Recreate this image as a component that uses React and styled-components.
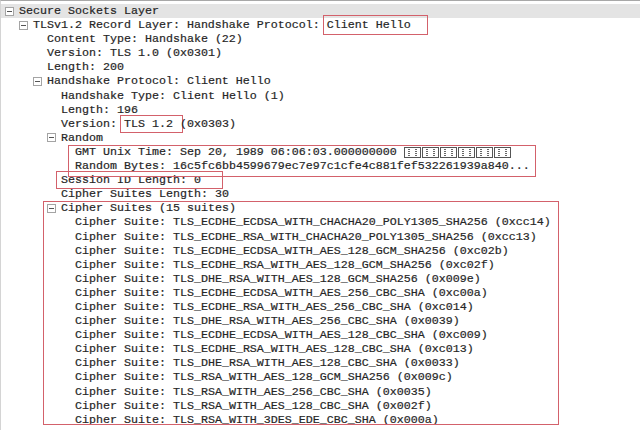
import React from "react";
import styled, { createGlobalStyle } from "styled-components";

const Global = createGlobalStyle`
  html, body { margin: 0; padding: 0; background: #fff; overflow: hidden; }
  body { width: 640px; height: 430px; }
`;

const ROW_H = 14.1;
const MARK = "#d3616b";

const Pane = styled.div`
  width: 640px;
  height: 430px;
  box-sizing: border-box;
  border-top: 1px solid #a8a8a8;
  border-left: 1px solid #d4d4d4;
  padding-top: 3px;
  overflow: hidden;
  background: #fff;
  font-family: "Liberation Mono", "DejaVu Sans Mono", monospace;
  font-size: 11.67px;
  color: #262626;
  -webkit-text-stroke: 0.2px #262626;
`;

const Row = styled.div`
  display: flex;
  align-items: center;
  height: ${ROW_H}px;
  line-height: ${ROW_H}px;
  padding-left: ${(p) => 4 + p.$level * 14}px;
  background: ${(p) => (p.$selected ? "#e4e4e4" : "transparent")};
  white-space: pre;
`;

const Slot = styled.span`
  flex: none;
  width: 14px;
  height: ${ROW_H}px;
  display: flex;
  align-items: center;
`;

const Expander = styled.span`
  position: relative;
  width: 7px;
  height: 7px;
  border: 1px solid #a4a4a4;
  background: #fff;
  &::after {
    content: "";
    position: absolute;
    left: 1px;
    right: 1px;
    top: 3px;
    height: 1px;
    background: #555;
  }
`;

const Text = styled.span`
  flex: none;
`;

const Boxed = styled.span`
  border: 1px solid ${MARK};
  padding: ${(p) => p.$py}px ${(p) => p.$pr}px ${(p) => p.$py}px ${(p) => p.$pl}px;
  margin-left: -${(p) => p.$pl + 1}px;
  margin-right: -${(p) => p.$pr + 1}px;
`;

const Group = styled.div`
  position: relative;
  &::after {
    content: "";
    position: absolute;
    left: ${(p) => p.$left}px;
    width: ${(p) => p.$width}px;
    top: ${(p) => p.$top}px;
    bottom: ${(p) => p.$bottom}px;
    border: 1px solid ${MARK};
    box-sizing: border-box;
    pointer-events: none;
  }
`;

const TofuGroup = styled.span`
  display: inline-flex;
  align-items: center;
  justify-content: space-around;
  box-sizing: border-box;
  width: 17px;
  height: 11px;
  margin-right: 1px;
  border: 1px solid #555;
  vertical-align: -1px;
`;

const TofuDot = styled.span`
  width: 2px;
  height: 7px;
  border-left: 1px dotted #666;
  border-right: 1px dotted #666;
  box-sizing: border-box;
`;

const Tofu = () => (
  <>
    {Array.from({ length: 6 }).map((_, i) => (
      <TofuGroup key={i}>
        <TofuDot />
        <TofuDot />
      </TofuGroup>
    ))}
  </>
);

const TreeRow = ({ level, open, selected, children }) => (
  <Row $level={level} $selected={selected}>
    <Slot>{open ? <Expander /> : null}</Slot>
    <Text>{children}</Text>
  </Row>
);

const suites = [
  "TLS_ECDHE_ECDSA_WITH_CHACHA20_POLY1305_SHA256 (0xcc14)",
  "TLS_ECDHE_RSA_WITH_CHACHA20_POLY1305_SHA256 (0xcc13)",
  "TLS_ECDHE_ECDSA_WITH_AES_128_GCM_SHA256 (0xc02b)",
  "TLS_ECDHE_RSA_WITH_AES_128_GCM_SHA256 (0xc02f)",
  "TLS_DHE_RSA_WITH_AES_128_GCM_SHA256 (0x009e)",
  "TLS_ECDHE_ECDSA_WITH_AES_256_CBC_SHA (0xc00a)",
  "TLS_ECDHE_RSA_WITH_AES_256_CBC_SHA (0xc014)",
  "TLS_DHE_RSA_WITH_AES_256_CBC_SHA (0x0039)",
  "TLS_ECDHE_ECDSA_WITH_AES_128_CBC_SHA (0xc009)",
  "TLS_ECDHE_RSA_WITH_AES_128_CBC_SHA (0xc013)",
  "TLS_DHE_RSA_WITH_AES_128_CBC_SHA (0x0033)",
  "TLS_RSA_WITH_AES_128_GCM_SHA256 (0x009c)",
  "TLS_RSA_WITH_AES_256_CBC_SHA (0x0035)",
  "TLS_RSA_WITH_AES_128_CBC_SHA (0x002f)",
  "TLS_RSA_WITH_3DES_EDE_CBC_SHA (0x000a)",
];

export default function App() {
  return (
    <>
      <Global />
      <Pane>
        <TreeRow level={0} open selected>Secure Sockets Layer</TreeRow>
        <TreeRow level={1} open>
          {"TLSv1.2 Record Layer: Handshake Protocol: "}
          <Boxed $py={2} $pl={3} $pr={16}>Client Hello</Boxed>
        </TreeRow>
        <TreeRow level={2}>Content Type: Handshake (22)</TreeRow>
        <TreeRow level={2}>Version: TLS 1.0 (0x0301)</TreeRow>
        <TreeRow level={2}>Length: 200</TreeRow>
        <TreeRow level={2} open>Handshake Protocol: Client Hello</TreeRow>
        <TreeRow level={3}>Handshake Type: Client Hello (1)</TreeRow>
        <TreeRow level={3}>Length: 196</TreeRow>
        <TreeRow level={3}>
          {"Version: "}
          <Boxed $py={1} $pl={3} $pr={2}>TLS 1.2 </Boxed>
          {"(0x0303)"}
        </TreeRow>
        <TreeRow level={3} open>Random</TreeRow>
        <Group $left={67} $width={468} $top={0} $bottom={-4}>
          <TreeRow level={4}>
            {"GMT Unix Time: Sep 20, 1989 06:06:03.000000000 "}
            <Tofu />
          </TreeRow>
          <TreeRow level={4}>
            Random Bytes: 16c5fc6bb4599679ec7e97c1cfe4c881fef532261939a840...
          </TreeRow>
        </Group>
        <TreeRow level={3}>
          <Boxed $py={1} $pl={4} $pr={21}>Session ID Length: 0</Boxed>
        </TreeRow>
        <TreeRow level={3}>Cipher Suites Length: 30</TreeRow>
        <Group $left={42} $width={516} $top={0} $bottom={2}>
          <TreeRow level={3} open>Cipher Suites (15 suites)</TreeRow>
          {suites.map((s) => (
            <TreeRow key={s} level={4}>{"Cipher Suite: " + s}</TreeRow>
          ))}
        </Group>
      </Pane>
    </>
  );
}
